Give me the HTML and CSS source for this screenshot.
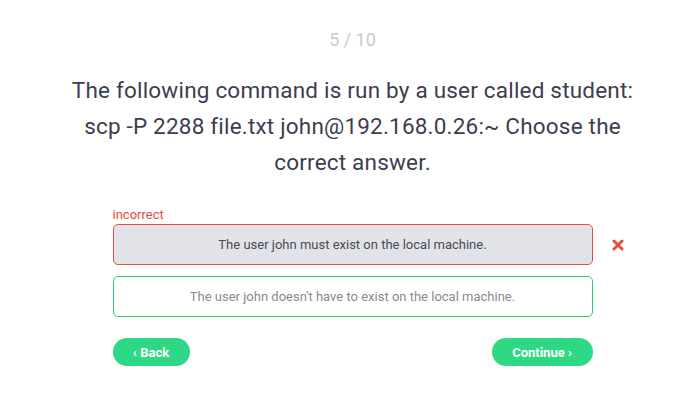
FILE: index.html
```html
<!DOCTYPE html>
<html lang="en">
<head>
  <meta charset="UTF-8">
  <meta name="viewport" content="width=device-width, initial-scale=1">
  <title>Quiz</title>
  <link rel="stylesheet" href="styles.css">
</head>
<body>
  <main class="quiz">
    <div class="progress">5 / 10</div>

    <h1 class="question">The following command is run by a user called student: scp -P 2288 file.txt john@192.168.0.26:~ Choose the correct answer.</h1>

    <div class="answers">
      <div class="answer-row">
        <div class="answer-label">incorrect</div>
        <div class="answer wrong">The user john must exist on the local machine.</div>
        <span class="mark">
          <svg width="12" height="12" viewBox="0 0 12 12">
            <path d="M2 2 L10 10 M10 2 L2 10" stroke="#e74c3c" stroke-width="3" stroke-linecap="round"/>
          </svg>
        </span>
      </div>
      <div class="answer-row">
        <div class="answer right">The user john doesn't have to exist on the local machine.</div>
      </div>
    </div>

    <div class="nav">
      <button class="btn">&lsaquo; Back</button>
      <button class="btn">Continue &rsaquo;</button>
    </div>
  </main>
</body>
</html>
```

FILE: styles.css
```css
* {
  margin: 0;
  padding: 0;
  box-sizing: border-box;
  font-family: Roboto, 'Liberation Sans', sans-serif;
}
body {
  background: #ffffff;
  color: #3b3b4f;
}
.quiz {
  width: 641px;
  margin-left: 32px;
  display: flex;
  flex-direction: column;
  align-items: center;
  padding-top: 28px;
}
.progress {
  font-size: 18px;
  color: #c9c9cc;
  line-height: 24px;
}
.question {
  margin-top: 20px;
  width: 592px;
  text-align: center;
  font-size: 22.5px;
  font-weight: 400;
  line-height: 36px;
  letter-spacing: 0.2px;
  color: #3d3d50;
}
.answers {
  margin-top: 26px;
  width: 480px;
  display: flex;
  flex-direction: column;
  gap: 11px;
}
.answer-row {
  position: relative;
}
.answer-label {
  font-size: 13px;
  color: #e74c3c;
  line-height: 18px;
}
.answer {
  height: 41px;
  border-radius: 5px;
  display: flex;
  align-items: center;
  justify-content: center;
  font-size: 13px;
}
.answer.wrong {
  background: #e2e3e8;
  border: 1px solid #e74c3c;
  color: #4a4a55;
}
.answer.right {
  background: #ffffff;
  border: 1px solid #2ecc71;
  color: #8a8a90;
}
.mark {
  position: absolute;
  right: -31px;
  bottom: 14px;
  display: flex;
}
.nav {
  margin-top: 21px;
  width: 480px;
  display: flex;
  justify-content: space-between;
}
.btn {
  height: 28px;
  padding: 0 17px;
  border: none;
  border-radius: 14px;
  background: #2ed884;
  color: #ffffff;
  font-size: 13px;
  font-weight: 700;
  cursor: pointer;
}
.btn:first-child {
  width: 77px;
}
.btn:last-child {
  width: 101px;
}
```
